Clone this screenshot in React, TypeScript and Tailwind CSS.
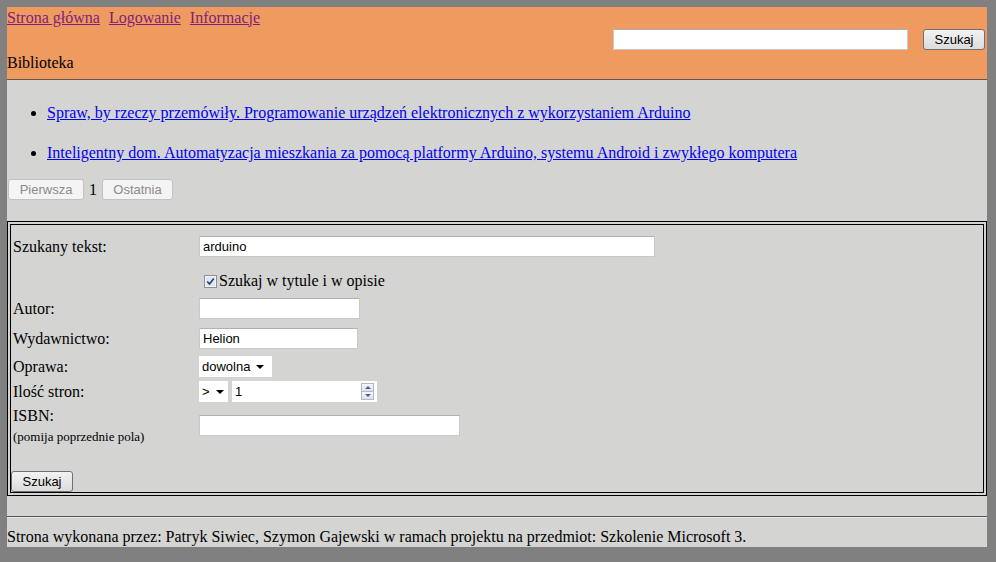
import React from 'react';

const serif = { fontFamily: '"Liberation Serif", "Times New Roman", serif' };
const sans = { fontFamily: '"Liberation Sans", Arial, sans-serif' };

function TextBox({ w, value }: { w: number; value?: string }) {
  return (
    <div
      className="h-[21px] bg-white border border-[#c9c9c9] border-t-[#b0b0b0] flex items-center px-[3px] text-[13px] leading-none text-black"
      style={{ width: w, ...sans }}
    >
      {value}
    </div>
  );
}

function Caret() {
  return <span className="inline-block w-0 h-0 border-l-[4px] border-r-[4px] border-t-[4px] border-l-transparent border-r-transparent border-t-black" />;
}

function Btn({ label, disabled, w }: { label: string; disabled?: boolean; w: number }) {
  return (
    <div
      className={`h-[21px] rounded-[3px] border flex items-center justify-center text-[13px] leading-none ${disabled ? 'border-[#c2c2c2] bg-[#f4f4f4] text-[#8a8a8a]' : 'border-[#707070] bg-gradient-to-b from-[#f2f2f2] to-[#dcdcdc] text-black'}`}
      style={{ width: w, ...sans }}
    >
      {label}
    </div>
  );
}

export default function App() {
  return (
    <div className="w-[996px] h-[562px] bg-[#808080] pl-[7px] pt-[7px] overflow-hidden" style={serif}>
      <div className="w-[980px] h-[540px] bg-[#d4d4d3] text-[16px] leading-[18px] text-black">
        {/* header */}
        <div className="h-[73px] bg-[#ef9a5f] border-b border-[#6a5446]">
          <div className="h-[21px] flex items-center gap-[9px] text-[#7e1e7e] underline leading-none">
            <span>Strona główna</span>
            <span>Logowanie</span>
            <span>Informacje</span>
          </div>
          <div className="flex justify-end items-center gap-[15px] pr-[2px] mt-[1px]">
            <TextBox w={295} />
            <Btn label="Szukaj" w={62} />
          </div>
          <div className="mt-[4px]">Biblioteka</div>
        </div>

        {/* results */}
        <ul className="list-disc pl-[40px] mt-[24px]">
          <li className="text-[#0000ee] underline marker:text-black">Spraw, by rzeczy przemówiły. Programowanie urządzeń elektronicznych z wykorzystaniem Arduino</li>
          <li className="text-[#0000ee] underline marker:text-black mt-[22px]">Inteligentny dom. Automatyzacja mieszkania za pomocą platformy Arduino, systemu Android i zwykłego komputera</li>
        </ul>
        <div className="flex items-center mt-[17px] pl-[1px] gap-[5px]">
          <Btn label="Pierwsza" disabled w={76} />
          <span>1</span>
          <Btn label="Ostatnia" disabled w={71} />
        </div>

        {/* search form */}
        <div className="mt-[21px] h-[275px] border-[4px] border-double border-black px-[2px]">
          <div className="flex items-center mt-[11px]">
            <div className="w-[186px]">Szukany tekst:</div>
            <TextBox w={456} value="arduino" />
          </div>
          <div className="flex items-center mt-[15px] pl-[186px] gap-[2px]">
            <svg width="13" height="13" viewBox="0 0 13 13" className="ml-[5px]">
              <rect x="0.5" y="0.5" width="12" height="12" fill="#f2f4f8" stroke="#8e8f8f" />
              <rect x="2" y="2" width="9" height="9" fill="#dfe6f2" />
              <path d="M3.2 6.5 L5.5 9 L9.8 3.4" fill="none" stroke="#2a3a7a" strokeWidth="1.6" />
            </svg>
            <span>Szukaj w tytule i w opisie</span>
          </div>
          <div className="flex items-center mt-[8px]">
            <div className="w-[186px]">Autor:</div>
            <TextBox w={161} />
          </div>
          <div className="flex items-center mt-[9px]">
            <div className="w-[186px]">Wydawnictwo:</div>
            <TextBox w={159} value="Helion" />
          </div>
          <div className="flex items-center mt-[7px]">
            <div className="w-[186px]">Oprawa:</div>
            <div className="h-[21px] w-[73px] bg-white flex items-center pl-[3px] gap-[6px] text-[13px] leading-none" style={sans}>
              <span>dowolna</span>
              <Caret />
            </div>
          </div>
          <div className="flex items-center mt-[4px]">
            <div className="w-[186px]">Ilość stron:</div>
            <div className="h-[21px] w-[29px] bg-white flex items-center pl-[3px] gap-[6px] text-[13px] leading-none" style={sans}>
              <span>&gt;</span>
              <Caret />
            </div>
            <div className="ml-[4px] h-[21px] w-[145px] bg-white flex items-center justify-between pl-[3px] pr-[3px] text-[13px] leading-none" style={sans}>
              <span>1</span>
              <div className="flex flex-col w-[13px] h-[17px] border border-[#b5b8c8]">
                <div className="flex-1 bg-gradient-to-b from-[#f6f7fb] to-[#dde1ec] flex items-center justify-center border-b border-[#b5b8c8]">
                  <span className="w-0 h-0 border-l-[3px] border-r-[3px] border-b-[3px] border-l-transparent border-r-transparent border-b-[#4d6185]" />
                </div>
                <div className="flex-1 bg-gradient-to-b from-[#f6f7fb] to-[#dde1ec] flex items-center justify-center">
                  <span className="w-0 h-0 border-l-[3px] border-r-[3px] border-t-[3px] border-l-transparent border-r-transparent border-t-[#4d6185]" />
                </div>
              </div>
            </div>
          </div>
          <div className="flex items-start mt-[5px]">
            <div className="w-[186px]">
              <div>ISBN:</div>
              <div className="text-[13px] leading-[16px] mt-[4px]">(pomija poprzednie pola)</div>
            </div>
            <div className="mt-[8px]">
              <TextBox w={261} />
            </div>
          </div>
          <div className="mt-[26px] -ml-[2px]">
            <Btn label="Szukaj" w={62} />
          </div>
        </div>

        {/* footer */}
        <div className="mt-[20px] border-t border-[#555] border-b border-b-[#e8e8e8]" />
        <div className="mt-[10px]">Strona wykonana przez: Patryk Siwiec, Szymon Gajewski w ramach projektu na przedmiot: Szkolenie Microsoft 3.</div>
      </div>
    </div>
  );
}
